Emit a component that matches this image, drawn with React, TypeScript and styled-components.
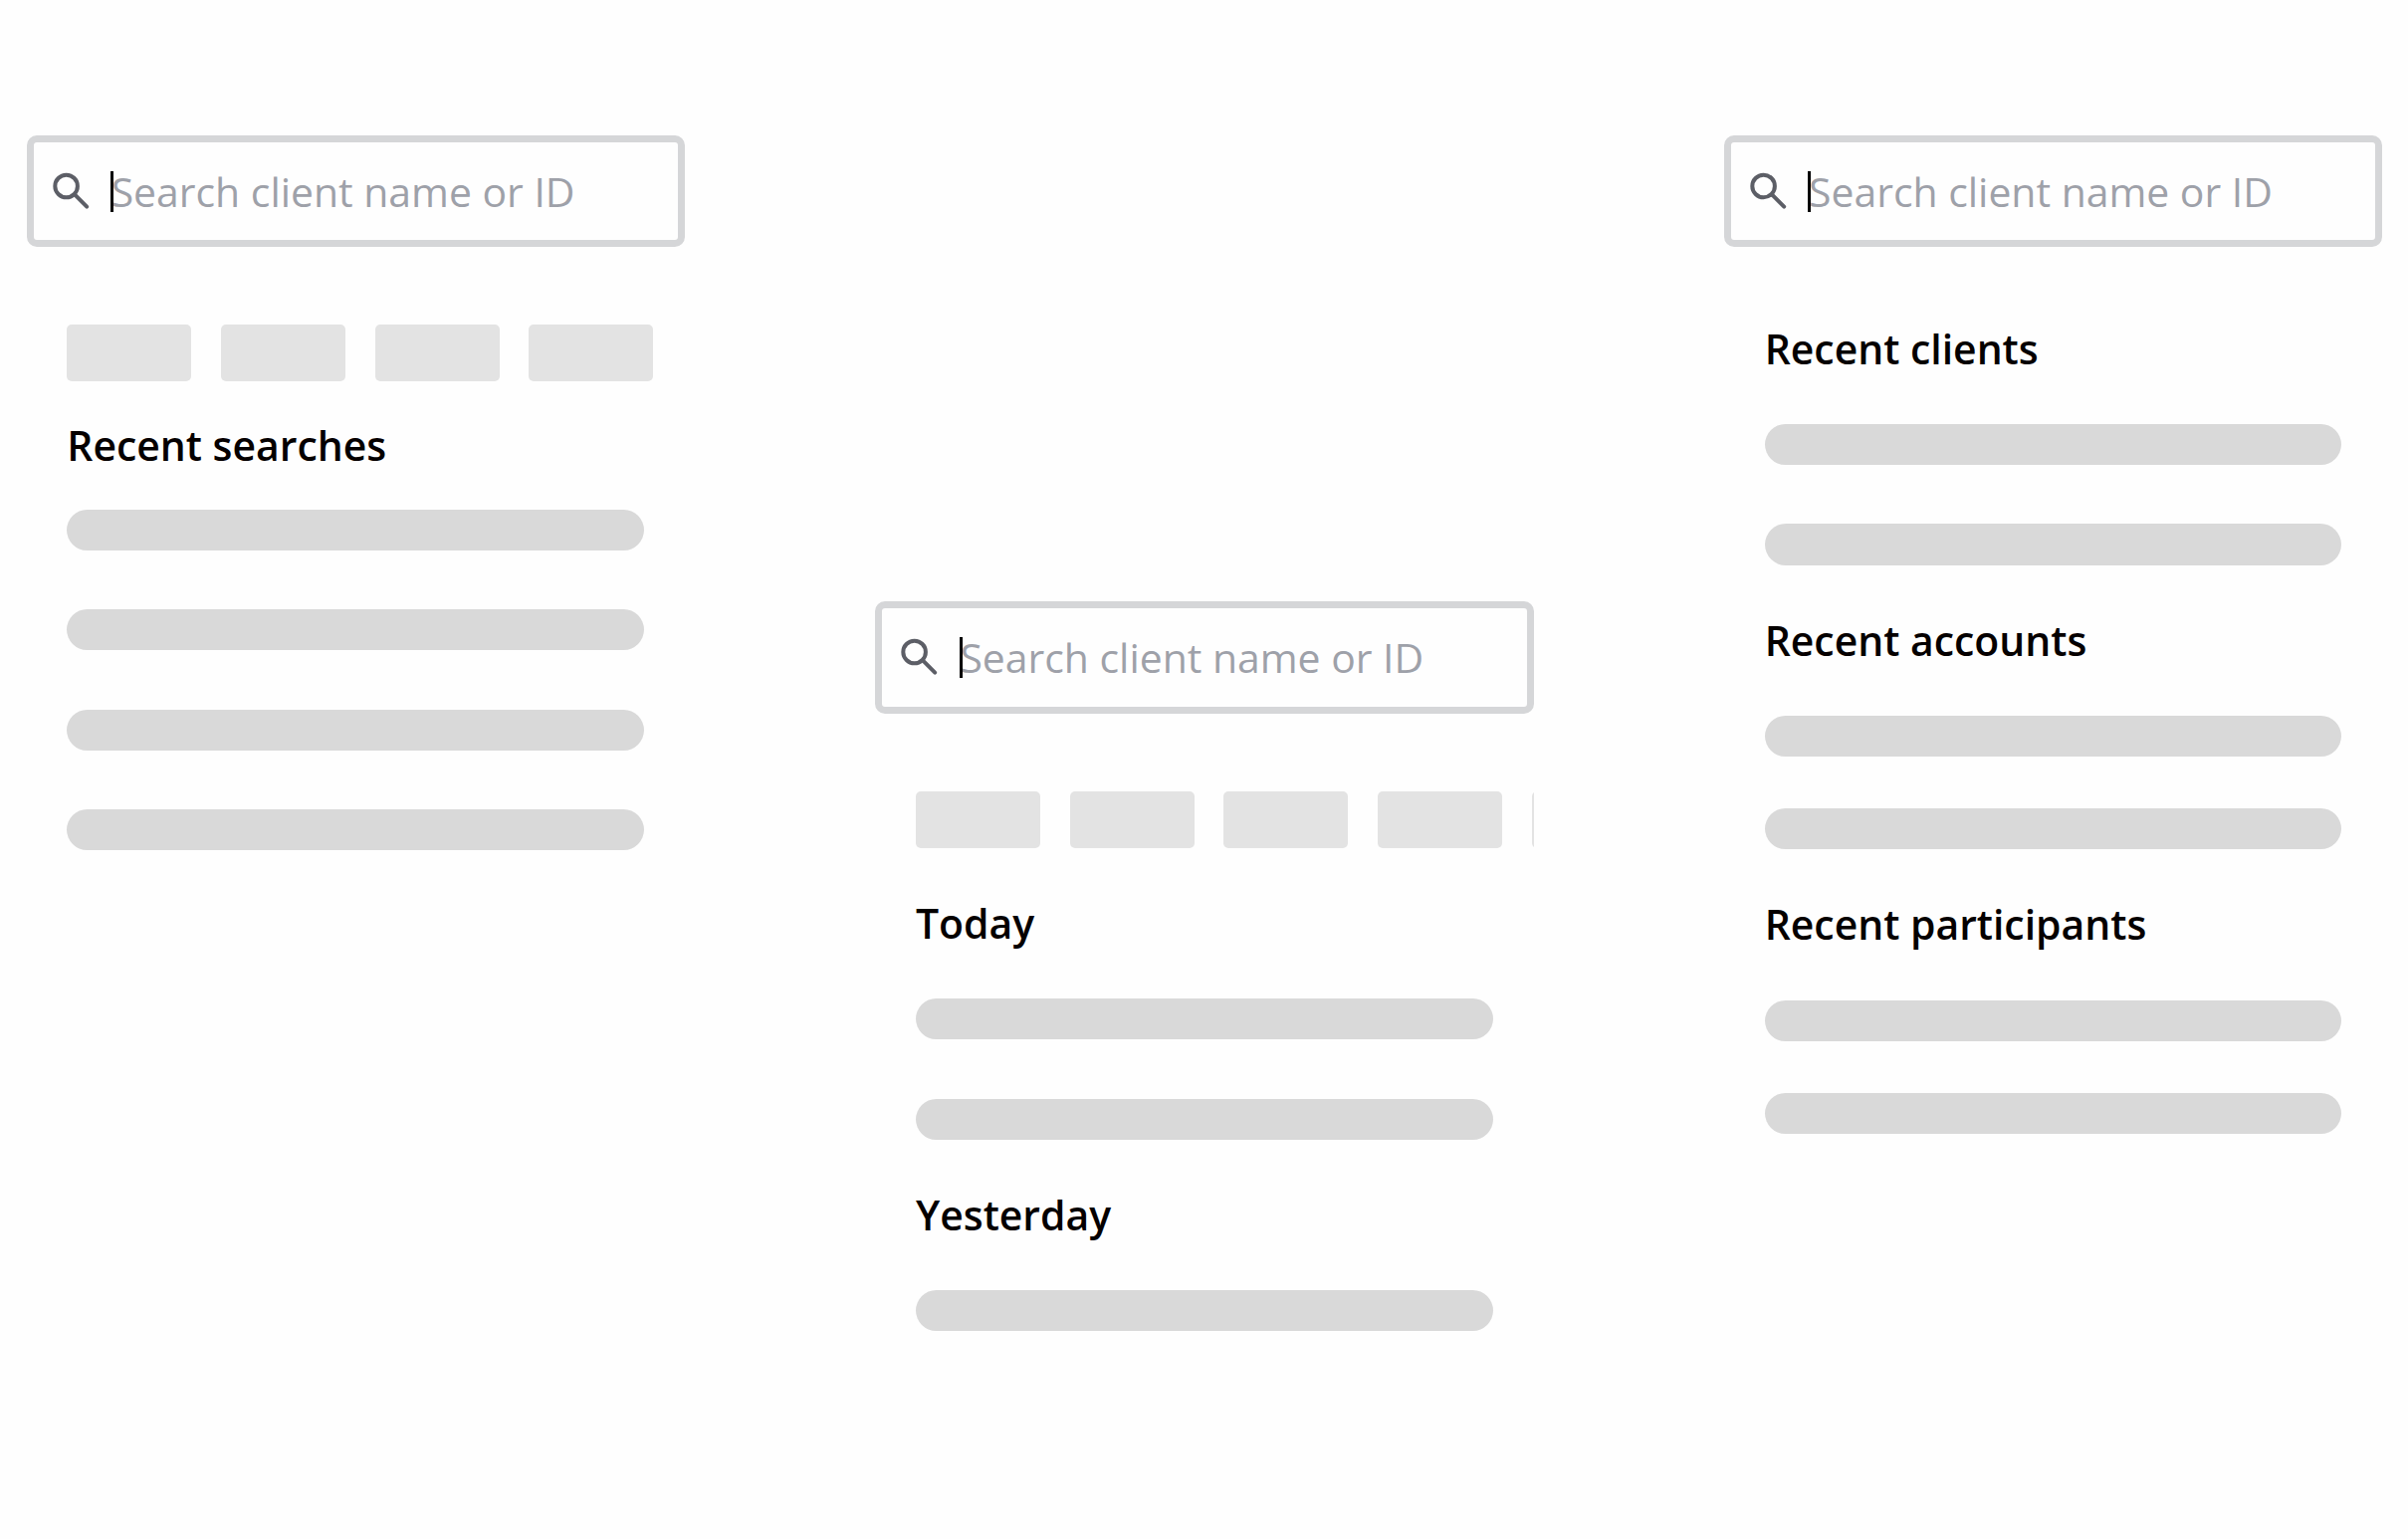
import React from 'react';
import styled, { createGlobalStyle } from 'styled-components';

const GlobalStyle = createGlobalStyle`
  body {
    margin: 0;
    background-color: #fefefe;
  }
`
const Page = styled.main`
  box-sizing: border-box;
  display: flex;
  align-items: flex-start;
  gap: 191.3px;
  width: 2419px;
  height: 1546px;
  padding: 136px 0 0 26.7px;
  overflow: hidden;
  font-family: 'Open Sans', 'Noto Sans', sans-serif;
  font-size: 40.9px;
`
const Panel = styled.section<{ $offset?: number }>`
  flex: none;
  width: 661.4px;
  margin-top: ${({ $offset = 0 }) => $offset}px;
`
const SearchBox = styled.div`
  box-sizing: border-box;
  display: flex;
  align-items: center;
  height: 112.4px;
  padding-left: 18px;
  border: 7px solid #d5d6d8;
  border-radius: 10px;
`
const SearchIcon = styled.svg`
  flex: none;
  width: 40px;
  height: 40px;
  margin-top: 2px;
`
const Caret = styled.span`
  flex: none;
  width: 3px;
  height: 41px;
  margin: 1px -2.3px 0 19.3px;
  background-color: #000;
  z-index: 1;
`
const Placeholder = styled.span`
  line-height: 56px;
  margin-top: -1.4px;
  color: #9ea1a9;
  white-space: nowrap;
`
const Chips = styled.div`
  display: flex;
  gap: 29.7px;
  margin-top: 77.9px;
  padding-left: 40.6px;
  overflow: hidden;
`
const Chip = styled.div`
  flex: none;
  width: 125px;
  height: 57px;
  border-radius: 5px;
  background-color: #e3e3e3;
`
const Results = styled.div`
  padding-left: 40.6px;
`
const Title = styled.h2<{ $before: number }>`
  margin: ${({ $before }) => $before}px 0 0;
  font-size: inherit;
  font-weight: 600;
  line-height: 56px;
  color: #050000;
  white-space: nowrap;
`
const Bars = styled.div<{ $before: number; $gap?: number }>`
  display: grid;
  gap: ${({ $gap = 59.1 }) => $gap}px;
  margin-top: ${({ $before }) => $before}px;
`
const Bar = styled.div`
  width: 579.6px;
  height: 41.3px;
  border-radius: 21px;
  background-color: #d9d9d9;
`

const Search = () => (
  <SearchBox>
    <SearchIcon viewBox="0 0 40 40" fill="none" stroke="#5c5e66" strokeWidth="4" strokeLinecap="round">
      <circle cx="14.6" cy="14" r="11.3" />
      <path d="M23 22.4L35.2 34.6" />
    </SearchIcon>
    <Caret />
    <Placeholder>Search client name or ID</Placeholder>
  </SearchBox>
)

const ChipRow = ({ count }: { count: number }) => (
  <Chips>
    {Array.from({ length: count }, (_, i) => <Chip key={i} />)}
  </Chips>
)

interface GroupProps {
  title: string;
  count: number;
  before: number;
  after: number;
  gap?: number;
}

// before = space above the title, after = space between title and first bar
const Group = ({ title, count, before, after, gap }: GroupProps) => (
  <>
    <Title $before={before}>{title}</Title>
    <Bars $before={after} $gap={gap}>
      {Array.from({ length: count }, (_, i) => <Bar key={i} />)}
    </Bars>
  </>
)

const App = () => {
  return (
    <Page>
      <GlobalStyle />
      <Panel>
        <Search />
        <ChipRow count={4} />
        <Results>
          <Group title="Recent searches" count={4} before={35.7} after={36.8} />
        </Results>
      </Panel>
      <Panel $offset={468.3}>
        <Search />
        <ChipRow count={5} />
        <Results>
          <Group title="Today" count={2} before={47} after={48.6} />
          <Group title="Yesterday" count={1} before={47} after={48.3} />
        </Results>
      </Panel>
      <Panel>
        <Search />
        <Results>
          <Group title="Recent clients" count={2} before={73.5} after={48.1} />
          <Group title="Recent accounts" count={2} before={47} after={48.3} gap={51.4} />
          <Group title="Recent participants" count={2} before={47.2} after={48.8} gap={51.4} />
        </Results>
      </Panel>
    </Page>
  );
}

export default App;
